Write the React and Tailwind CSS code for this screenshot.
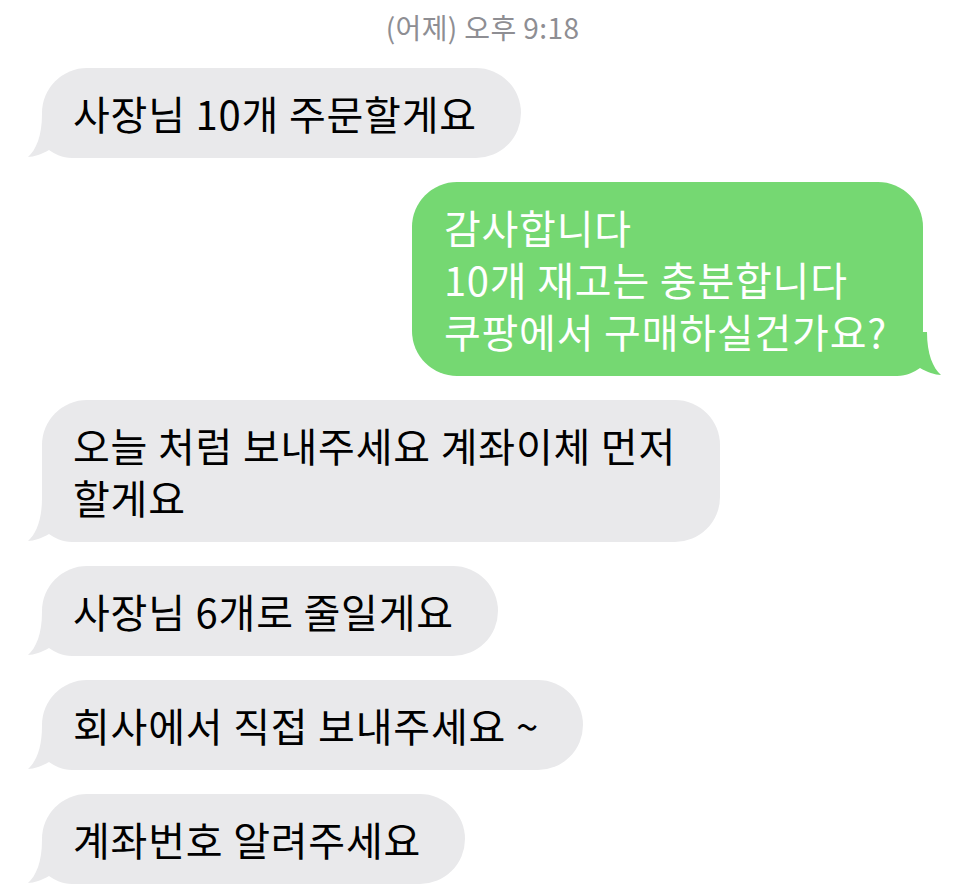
const messages = [
  { from: 'them', lines: ['사장님 10개 주문할게요'] },
  { from: 'me', lines: ['감사합니다', '10개 재고는 충분합니다', '쿠팡에서 구매하실건가요?'] },
  { from: 'them', lines: ['오늘 처럼 보내주세요 계좌이체 먼저', '할게요'] },
  { from: 'them', lines: ['사장님 6개로 줄일게요'] },
  { from: 'them', lines: ['회사에서 직접 보내주세요 ~'] },
  { from: 'them', lines: ['계좌번호 알려주세요'] },
];

function Tail({ side, color }) {
  const pos = side === 'left' ? 'left-[-14px]' : 'right-[-18px] -scale-x-100';
  return (
    <svg
      className={`absolute bottom-0 ${pos}`}
      width="64"
      height="44"
      viewBox="0 0 64 44"
    >
      <path
        d="M14 0 C14 22 8 36 0 43 C6 43 14 40 21 36 C27 40 34 44 44 44 L64 44 L64 0 Z"
        fill={color}
      />
    </svg>
  );
}

function Bubble({ from, lines }) {
  const mine = from === 'me';
  return (
    <div className={`flex ${mine ? 'justify-end' : 'justify-start'}`}>
      <div
        className={`relative rounded-[45px] py-[19px] text-[40px] leading-[52px] tracking-[0.8px] whitespace-nowrap ${
          mine ? 'bg-[#75d872] text-white pl-[32px] pr-[36px]' : 'bg-[#e9e9eb] text-black pl-[31px] pr-[44px]'
        }`}
      >
        <Tail side={mine ? 'right' : 'left'} color={mine ? '#75d872' : '#e9e9eb'} />
        <div className="relative">
          {lines.map((l, i) => (
            <div key={i}>{l}</div>
          ))}
        </div>
      </div>
    </div>
  );
}

export default function App() {
  return (
    <div
      className="min-h-screen bg-white pl-[42px] pr-[43px]"
      style={{ fontFamily: '"Noto Sans CJK KR", "Noto Sans", sans-serif' }}
    >
      <div className="pt-[9px] h-[68px] text-center text-[28px] leading-[36px] tracking-[0.4px] text-[#8e8e93]">
        (어제) 오후 9:18
      </div>
      <div className="flex flex-col gap-[24px]">
        {messages.map((m, i) => (
          <Bubble key={i} from={m.from} lines={m.lines} />
        ))}
      </div>
    </div>
  );
}
